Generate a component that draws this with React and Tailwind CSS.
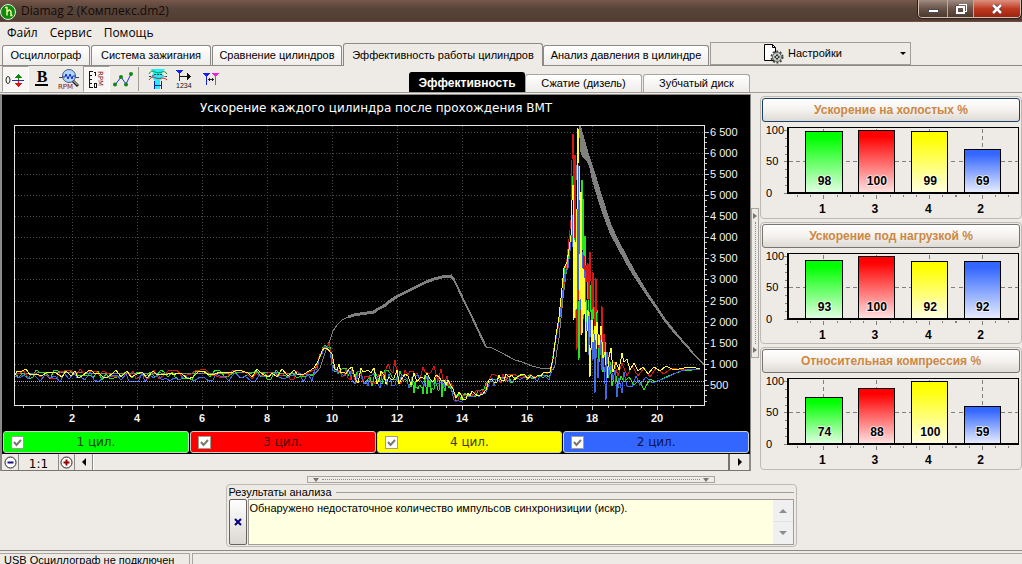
// src/App.jsx
import React, { useState } from 'react';

const MENU = ['Файл', 'Сервис', 'Помощь'];

const TABS = [
  { id: 'scope',    label: 'Осциллограф',                    width: 'w-[88px]' },
  { id: 'ignition', label: 'Система зажигания',              width: 'w-[120px]' },
  { id: 'compare',  label: 'Сравнение цилиндров',            width: 'w-[130px]' },
  { id: 'work',     label: 'Эффективность работы цилиндров', width: 'w-[200px]' },
  { id: 'pressure', label: 'Анализ давления в цилиндре',     width: 'w-[166px]' },
];

const SUB_TABS = [
  { id: 'eff',  label: 'Эффективность',   width: 'w-[116px]' },
  { id: 'comp', label: 'Сжатие (дизель)', width: 'w-[117px]' },
  { id: 'gear', label: 'Зубчатый диск',   width: 'w-[107px]' },
];

const CYLINDERS = [
  { id: 1, color: '#00ff00', trace: '#22e622', bg: 'bg-[#00ff00]', text: 'text-[#064006]' },
  { id: 3, color: '#ff0000', trace: '#d81818', bg: 'bg-[#ff0000]', text: 'text-[#500000]' },
  { id: 4, color: '#ffff00', trace: '#ffff30', bg: 'bg-[#ffff00]', text: 'text-[#404000]' },
  { id: 2, color: '#3366ff', trace: '#3f68e8', bg: 'bg-[#3366ff]', text: 'text-[#0a1450]' },
];

const PANELS = [
  { title: 'Ускорение на холостых %',    values: [98, 100, 99, 69], focused: true },
  { title: 'Ускорение под нагрузкой %',  values: [93, 100, 92, 92] },
  { title: 'Относительная компрессия %', values: [74, 88, 100, 59] },
];

/* ---------- main chart data ---------- */

function makeRandom(seed) {
  let s = seed;
  return () => {
    s = (s * 16807) % 2147483647;
    return s / 2147483647;
  };
}

// common shape of all traces: [x, y, noise]
const IDLE = [
  [14, 375, 5], [312, 375, 5], [316, 369, 2], [320, 355, 4], [325, 346, 3], [329, 346, 4],
  [333, 364, 6], [338, 370, 6], [346, 374, 7], [358, 377, 8], [380, 377, 9], [404, 379, 8],
  [414, 379, 7], [446, 380, 6], [451, 388, 4], [456, 398, 5], [466, 397, 5], [484, 392, 3],
  [488, 380, 7], [500, 380, 5], [530, 377, 3], [550, 375, 3], [553, 360, 4], [556, 336, 4],
  [560, 310, 8], [564, 276, 8], [567, 266, 7], [570, 246, 6],
];

// run-up bursts and the settling tail, one list for each cylinder
const BURST = {
  1: [[571, 235], [572, 190], [573, 176], [574, 262], [575, 210], [576, 318], [577, 250], [578, 300],
    [579, 360], [580, 212], [581, 320], [582, 180], [582, 250], [583, 199], [584, 305], [585, 236],
    [586, 330], [588, 270], [589, 340], [591, 285], [592, 350], [593, 292], [595, 345], [597, 310],
    [599, 362], [601, 330], [603, 372], [605, 342], [608, 378], [610, 362], [612, 386], [615, 370],
    [618, 388], [621, 376], [624, 382], [629, 377], [634, 385], [639, 380], [644, 390], [650, 379],
    [656, 382], [662, 379], [668, 376], [676, 373], [684, 370], [692, 370], [700, 369]],
  3: [[571, 220], [572, 160], [573, 134], [574, 240], [575, 155], [576, 290], [577, 350], [578, 165],
    [579, 300], [580, 220], [581, 335], [582, 290], [584, 255], [585, 292], [586, 265], [587, 282],
    [588, 263], [589, 300], [590, 252], [592, 310], [593, 272], [595, 340], [596, 278], [598, 345],
    [600, 350], [602, 306], [603, 355], [604, 334], [606, 372], [608, 355], [610, 367], [614, 362],
    [618, 376], [622, 363], [627, 376], [632, 366], [638, 376], [644, 368], [650, 377], [656, 368],
    [664, 374], [672, 368], [682, 370], [700, 369]],
  4: [[571, 236], [572, 200], [573, 185], [574, 320], [575, 240], [576, 310], [577, 210], [578, 128],
    [579, 163], [580, 300], [581, 192], [582, 335], [583, 268], [584, 315], [585, 278], [586, 352],
    [588, 310], [590, 377], [592, 320], [593, 342], [595, 326], [596, 350], [597, 322], [599, 345],
    [601, 326], [603, 358], [605, 352], [607, 378], [609, 357], [611, 348], [613, 372], [616, 362],
    [619, 370], [622, 353], [624, 362], [627, 359], [630, 370], [634, 363], [638, 371], [643, 367],
    [648, 374], [654, 367], [660, 371], [666, 366], [674, 370], [684, 368], [692, 367], [700, 369]],
  2: [[571, 242], [572, 225], [573, 215], [574, 247], [575, 310], [576, 260], [577, 310], [578, 166],
    [579, 290], [580, 200], [581, 310], [582, 250], [583, 320], [585, 270], [586, 335], [588, 310],
    [589, 355], [591, 320], [593, 360], [594, 330], [595, 393], [596, 338], [598, 378], [600, 340],
    [602, 370], [603, 350], [606, 400], [607, 352], [609, 375], [611, 365], [613, 380], [615, 370],
    [617, 397], [619, 378], [622, 393], [624, 372], [627, 386], [632, 387], [636, 376], [640, 385],
    [646, 377], [652, 383], [660, 380], [668, 377], [678, 372], [688, 369], [700, 370]],
};

const OFFSET = { 1: 0, 3: -1, 4: -1, 2: 2 };

function envelope(x) {
  const i = Math.max(1, IDLE.findIndex(p => p[0] >= x));
  const [x0, y0, n0] = IDLE[i - 1];
  const [x1, y1, n1] = IDLE[i];
  const k = (x - x0) / (x1 - x0);
  return [y0 + (y1 - y0) * k, n0 + (n1 - n0) * k];
}

function buildTrace(id) {
  const rnd = makeRandom(id * 791933 + 4513);
  const pts = [];
  let x = 14;
  while (x < 570) {
    const [base, noise] = envelope(x);
    let y = base + OFFSET[id] + (rnd() - 0.5) * 2 * noise;
    if (x > 384 && x < 449) {
      if (id === 3) y -= rnd() * 10;
      if (id === 1 && x > 408) y += rnd() * 12;
    }
    pts.push([x, Math.round(y)]);
    x += x < 312 ? 3 + Math.round(rnd() * 3) : id === 1 && x > 408 && x < 450 ? 1 : 2 + Math.round(rnd());
  }
  return pts.concat(BURST[id]).map(p => p.join(',')).join(' ');
}

const DRAW_ORDER = [1, 3, 2, 4];
const TRACES = DRAW_ORDER.map(id => ({ ...CYLINDERS.find(c => c.id === id), points: buildTrace(id) }));

const X_LABELS = [2, 4, 6, 8, 10, 12, 14, 16, 18, 20];
const Y_LABELS = [500, 1000, 1500, 2000, 2500, 3000, 3500, 4000, 4500, 5000, 5500, 6000, 6500];
const toX = v => Math.round(7 + v * 32.5);
const toY = v => Math.round(406 - v * 0.0422);
const fmt = v => (v >= 1000 ? `${Math.floor(v / 1000)} ${String(v % 1000).padStart(3, '0')}` : `${v}`);

function MainChart({ visible }) {
  return (
    <svg viewBox="2 95 748 335" className="block w-full" role="img" aria-label="Ускорение каждого цилиндра">
      <text x="376" y="112" textAnchor="middle" fill="#fff" className="font-['DejaVu_Sans',sans-serif] text-[12px]">
        Ускорение каждого цилиндра после прохождения ВМТ
      </text>

      {/* grid */}
      <g stroke="#484848" strokeDasharray="1 2" shapeRendering="crispEdges">
        {X_LABELS.map(v => <line key={v} x1={toX(v) + 0.5} x2={toX(v) + 0.5} y1="126" y2="405" />)}
        {Y_LABELS.map(v => <line key={v} x1="15" x2="704" y1={toY(v) + 0.5} y2={toY(v) + 0.5} />)}
      </g>

      {/* rpm curve */}
      <g fill="none" stroke="#808080" strokeWidth="1" shapeRendering="crispEdges">
        <polyline points="14,374 60,372 105,374 160,373 215,374 260,372 314,375 320,368 326,350 330,340 333,331 337,325 342,320 348,317" />
        <polyline strokeWidth="3" points="348,317 354,315 360,314 367,313 374,312 378,309 384,306 390,301 398,296 408,291 418,286 426,282 434,279 442,277 451,276 454,280" />
        <polyline strokeWidth="2" points="453,278 458,288 464,301 471,315 478,330 486,347" />
        <polyline points="486,347 490,347 500,352 515,360 522,362 532,366 540,368 549,368 553,370 555,365 557,350 559,338 561,318 563,298 565,282 568,258 570,243 574,210 577,165 578,140 580,126" />
      </g>
      <polygon
        fill="#808080"
        shapeRendering="crispEdges"
        points="579,126 581,126 584,137 588,151 594,169 600,189 606,208 612,226 619,241 627,256 634,269 641,281 649,294 657,306 665,318 673,328 682,339 690,348 697,357 704,364
          703,365 696,358 689,350 681,341 672,331 664,321 656,309 648,298 640,286 632,274 625,262 617,247 610,234 604,218 597,197 592,180 589,166 586,160 582,157 580,150"
      />

      {TRACES.filter(t => visible[t.id]).map(t => (
        <polyline key={t.id} points={t.points} fill="none" stroke={t.trace} strokeWidth="1" shapeRendering="crispEdges" />
      ))}

      {/* strongest strokes of the blue burst stay in front */}
      {visible[2] && (
        <path d="M572.5 215v32M578.5 166v36M579.5 200v54M585.5 272v30M588.5 316v30M595.5 340v52M601.5 344v24M606.5 356v42" stroke="#3f68e8" fill="none" shapeRendering="crispEdges" />
      )}

      <line x1="15" x2="704" y1="381.5" y2="381.5" stroke="#5fe0d8" strokeDasharray="1 1" shapeRendering="crispEdges" />
      <rect x="14.5" y="125.5" width="690" height="280" fill="none" stroke="#e4e4e4" shapeRendering="crispEdges" />

      {/* axis ticks */}
      <g stroke="#c8c8c8" shapeRendering="crispEdges">
        {Array.from({ length: 43 }, (_, i) => (i + 1) / 2).filter(v => v < 21.5).map(v => (
          <line key={v} x1={toX(v) + 0.5} x2={toX(v) + 0.5} y1="406" y2={v % 2 ? 408 : 410} />
        ))}
        {Array.from({ length: 52 }, (_, i) => (i + 1) * 125).map(v => (
          <line key={v} x1="705" x2={v % 500 ? 707 : 709} y1={toY(v) + 0.5} y2={toY(v) + 0.5} />
        ))}
      </g>
      <g fill="#f4f4f4" className="font-['Liberation_Sans',Arial,sans-serif] text-[11px]">
        {X_LABELS.map(v => (
          <text key={v} x={toX(v)} y="422" textAnchor="middle" className="font-bold">{v}</text>
        ))}
        {Y_LABELS.map(v => <text key={v} x="710" y={toY(v) + 4}>{fmt(v)}</text>)}
      </g>
    </svg>
  );
}

/* ---------- side bar charts ---------- */

const BAR_X = [43, 95, 148, 200];

function BarPanel({ title, values, focused }) {
  return (
    <section className="rounded-[4px] border border-[#bdbab6] px-px pt-px pb-0">
      <button
        className={`block w-full h-6 rounded-[3px] border bg-linear-to-b from-white via-[#f4f2ef] to-[#dedad5] text-[12px] leading-[22px] font-bold text-[#cc8844] ${
          focused ? 'border-[#1c3f66]' : 'border-[#77736f]'
        }`}
      >
        {title}
      </button>
      <svg viewBox="0 0 256 95" className="block w-full" role="img" aria-label={title}>
        <defs>
          {CYLINDERS.map(c => (
            <linearGradient key={c.id} id={`bar${c.id}`} x1="0" y1="0" x2="0" y2="1">
              <stop offset="0.1" stopColor={c.color} />
              <stop offset="1" stopColor={c.color} stopOpacity="0.12" />
            </linearGradient>
          ))}
        </defs>
        <g shapeRendering="crispEdges">
          <g stroke="#808080" strokeDasharray="4 3">
            <line x1="27" x2="254" y1="39.5" y2="39.5" />
            {BAR_X.map(x => <line key={x} x1={x + 18.5} x2={x + 18.5} y1="7" y2="70" />)}
          </g>
          <path d="M26 5.5h228.5V70" fill="none" stroke="#000" />
          <path d="M26 5v66M25 70.5h230" fill="none" stroke="#000" strokeWidth="2" />
          <path d="M22 8.5h3M22 39.5h3M22 70.5h3M23 16.5h2M23 24.5h2M23 32.5h2M23 47.5h2M23 55.5h2M23 63.5h2" stroke="#808080" />
          <path d="M35.5 72v2M48.5 72v2M61.5 72v4M74.5 72v2M87.5 72v2M100.5 72v2M113.5 72v4M127.5 72v2M140.5 72v2M153.5 72v2M166.5 72v4M179.5 72v2M192.5 72v2M205.5 72v2M218.5 72v4M231.5 72v2M244.5 72v2" stroke="#808080" />
          {values.map((v, i) => {
            const h = Math.round(v * 0.61);
            return (
              <g key={i}>
                <rect x={BAR_X[i]} y={69 - h} width="36" height={h} fill="#fff" />
                <rect x={BAR_X[i] + 0.5} y={69.5 - h} width="36" height={h} fill={`url(#bar${CYLINDERS[i].id})`} stroke="#000" />
              </g>
            );
          })}
        </g>
        <g className="text-[11px]" fill="#000">
          <text x="22" y="12" textAnchor="end">100</text>
          <text x="4" y="43">50</text>
          <text x="4" y="74">0</text>
        </g>
        <g className="text-[12px] font-bold" textAnchor="middle">
          {values.map((v, i) => (
            <g key={i}>
              <text x={BAR_X[i] + 19} y="63" stroke="#fff" strokeWidth="2" strokeOpacity="0.6" paintOrder="stroke" fill="#000">{v}</text>
              <text x={BAR_X[i] + 17} y="90" fill="#000">{CYLINDERS[i].id}</text>
            </g>
          ))}
        </g>
      </svg>
    </section>
  );
}

/* ---------- toolbar ---------- */

const ICONS = {
  zero: (
    <g fill="none" shapeRendering="crispEdges">
      <ellipse cx="2" cy="12" rx="2" ry="3.5" stroke="#222" shapeRendering="auto" />
      <path d="M6 12.5h12" stroke="#2233aa" />
      <path d="M12.5 8v4" stroke="#118811" />
      <path d="M9 10l3.5-4 3.5 4z" fill="#118811" />
      <path d="M12.5 13v4" stroke="#dd1111" />
      <path d="M9 15l3.5 4 3.5-4z" fill="#dd1111" />
    </g>
  ),
  bold: (
    <g>
      <text x="9" y="14" textAnchor="middle" fill="#000" className="font-['Liberation_Serif',serif] text-[16px] font-bold">B</text>
      <path d="M2 17h13" stroke="#000" strokeWidth="2" shapeRendering="crispEdges" />
    </g>
  ),
  zoomRpm: (
    <g>
      <path d="M-1 9.5h20" stroke="#334477" />
      <circle cx="9" cy="8" r="6.5" fill="#aed8ff" stroke="#445577" />
      <path d="M3 9h2l1-3 2 5 2-5 2 5 1-3h2" fill="none" stroke="#1122cc" />
      <path d="M13 13l5 5" stroke="#222" strokeWidth="3" />
      <path d="M13.5 13l4 4" stroke="#eee" />
      <text x="-2" y="21" fill="#881111" className="font-['DejaVu_Sans',sans-serif] text-[7px]">RPM</text>
    </g>
  ),
  rpmAxis: (
    <g>
      <path d="M6 3.5H2.5v16H6M3 7.5h2M3 11.5h2M3 15.5h2" fill="none" stroke="#111" shapeRendering="crispEdges" />
      <path d="M7 4.5h1.5V8M7.5 15.5h2v4h-2z" fill="none" stroke="#111" shapeRendering="crispEdges" />
      <text transform="translate(11 3) rotate(90)" x="0" y="0" fill="#881111" className="font-['DejaVu_Sans',sans-serif] text-[7px]">RPM</text>
    </g>
  ),
  nodes: (
    <g>
      <path d="M1 17l6-8 5 7 5-10" fill="none" stroke="#2233ee" />
      <g fill="#118811">
        <circle cx="1" cy="16.5" r="2" /><circle cx="7" cy="9" r="2" />
        <circle cx="12" cy="16.5" r="2" /><circle cx="17" cy="6" r="2" />
      </g>
    </g>
  ),
  average: (
    <g fill="none">
      <path d="M3 1h14l-3 4 1 4-3 4v8H7v-8L4 9l1-4z" fill="#22eeff" />
      <path d="M1 6c2-4 4-3 6-2s5 1 7 0 4 0 5 2" stroke="#119911" />
      <path d="M1 8.5h3l2-2h8l2 2h3" stroke="#113355" strokeDasharray="2 1" />
      <path d="M1 12c3-4 4-3 7-2s5 0 6 0 3 0 5 2" stroke="#cc2222" />
      <path d="M6.5 13v8M13.5 13v8M7 17.5h6" stroke="#1122aa" />
    </g>
  ),
  marker: (
    <g shapeRendering="crispEdges">
      <path d="M1 2h7L5 6v7H4V6z" fill="#1122ee" />
      <path d="M5 8.5h9" stroke="#111" />
      <path d="M12 5l4 3.5-4 3.5z" fill="#111" />
      <text x="1" y="20" fill="#111" className="font-['Liberation_Sans',sans-serif] text-[7px]">1234</text>
    </g>
  ),
  markers: (
    <g shapeRendering="crispEdges">
      <path d="M1 5h7L5 9v8H4V9z" fill="#1122ee" />
      <path d="M10 5h7l-3 4v8h-1V9z" fill="#ee22dd" />
      <path d="M6 11.5h6M7.5 10v3M10.5 10v3" stroke="#222" fill="none" />
    </g>
  ),
};

const TOOLS = [
  { id: 'zero', title: 'Ноль', pressed: true },
  { id: 'bold', title: 'Толщина линий' },
  { id: 'zoomRpm', title: 'Масштаб RPM' },
  { id: 'rpmAxis', title: 'Шкала RPM', pressed: true },
  { id: 'nodes', title: 'Точки' },
  { id: 'average', title: 'Усреднение' },
  { id: 'marker', title: 'Маркер' },
  { id: 'markers', title: 'Два маркера' },
];

function ToolButton({ id, title, pressed }) {
  return (
    <button
      aria-label={title}
      aria-pressed={!!pressed}
      className={`flex h-[26px] w-[27px] items-center justify-center border ${
        pressed ? 'border-t-[#a09c98] border-l-[#a09c98] border-r-white border-b-white bg-[#f8f7f5]' : 'border-transparent'
      }`}
    >
      <svg width="20" height="22" viewBox="0 0 20 22" className="overflow-visible">{ICONS[id]}</svg>
    </button>
  );
}

function Toolbar() {
  return (
    <div className="flex items-center pl-[2px]">
      {TOOLS.slice(0, 5).map(t => <ToolButton key={t.id} {...t} />)}
      <div className="mx-px h-6 w-px bg-[#a09c98]" />
      <div className="w-1" />
      {TOOLS.slice(5).map(t => <ToolButton key={t.id} {...t} />)}
    </div>
  );
}

/* ---------- window parts ---------- */

function TitleBar() {
  return (
    <header className="flex h-[22px] shrink-0 items-start justify-between border-b border-[#6e4c42] bg-linear-to-b from-[#77584b] via-[#594439] via-40% to-[#523d33]">
      <div className="flex h-[21px] items-center gap-1">
        <svg width="17" height="18" viewBox="0 0 17 18" aria-hidden="true">
          <circle cx="8" cy="10" r="7.5" fill="#0d8a12" stroke="#e8f0d8" />
          <path d="M5 5.5h2v8M7 10q3-4 4 0v3.5h1.5" fill="none" stroke="#f4f490" strokeWidth="1.5" />
        </svg>
        <h1 className="font-['Open_Sans','Noto_Sans',sans-serif] text-[12px] leading-5 text-[#140c08]">Diamag 2 (Комплекс.dm2)</h1>
      </div>
      <div className="mr-px flex h-[18px] overflow-hidden rounded-b-[4px] border border-t-0 border-[#d0beb4] outline outline-[#2c1e18]">
        <button aria-label="Свернуть" className="flex w-7 items-end justify-center bg-linear-to-b from-[#a08c82] via-[#6b5449] to-[#4d382e] pb-1">
          <span className="h-[4px] w-[11px] border border-[#4c4c50] bg-white" />
        </button>
        <button aria-label="Развернуть" className="flex w-[27px] items-center justify-center border-x border-[#bca99e] bg-linear-to-b from-[#a08c82] via-[#6b5449] to-[#4d382e]">
          <svg width="12" height="12" viewBox="0 0 12 12" fill="none" shapeRendering="crispEdges">
            <path d="M3.5 1.5h8v7h-2" stroke="#fff" />
            <path d="M2 4h7v6H2z" stroke="#fff" strokeWidth="2" />
            <path d="M.5 2.5h2M.5 2.5v8.5h10" stroke="#4c4c50" />
          </svg>
        </button>
        <button aria-label="Закрыть" className="flex w-[46px] items-center justify-center bg-linear-to-b from-[#dc9080] via-[#c03a20] to-[#9c2410]">
          <svg width="12" height="10" viewBox="0 0 12 10">
            <path d="M2 1l8 8M10 1L2 9" stroke="#5c3030" strokeWidth="4" />
            <path d="M2 1l8 8M10 1L2 9" stroke="#fff" strokeWidth="2.5" />
          </svg>
        </button>
      </div>
    </header>
  );
}

function PageTabs({ active, onSelect }) {
  return (
    <div className="relative flex h-[23px] shrink-0 items-end border-b border-[#8c8986] pl-[2px]">
      {TABS.map(tab => (
        <button
          key={tab.id}
          onClick={() => onSelect(tab.id)}
          className={`${tab.width} shrink-0 whitespace-nowrap rounded-t-[3px] border border-b-0 border-[#8c8986] text-[11px] ${
            active === tab.id
              ? '-mb-px h-[23px] bg-[#eeebe7]'
              : 'mr-px h-5 bg-linear-to-b from-white to-[#efedea]'
          }`}
        >
          {tab.label}
        </button>
      ))}
      <button aria-haspopup="menu" className="flex h-[23px] w-[201px] shrink-0 items-center border border-[#a09c98] pr-1 pl-[52px] text-[11px]">
        <svg width="21" height="21" viewBox="0 0 21 21" fill="none" aria-hidden="true">
          <path d="M1.5 1.5h8l3 3V17.5H1.5z" fill="#fff" stroke="#000" />
          <path d="M9.5 1.5v3h3" stroke="#000" />
          <circle cx="14" cy="14" r="5.5" stroke="#444" strokeWidth="2" strokeDasharray="2 1.5" />
          <circle cx="14" cy="14" r="4.5" fill="#c4d0c4" stroke="#666" />
          <path d="M14 11v6M11 14h6" stroke="#333" />
          <circle cx="14" cy="14" r="1.5" fill="#fff" stroke="#222" />
        </svg>
        <span className="ml-1 grow text-left">Настройки</span>
        <span className="border-x-[3px] border-t-[3px] border-x-transparent border-t-black" />
      </button>
    </div>
  );
}

function SubTabs({ active, onSelect }) {
  return (
    <div className="flex items-end">
      {SUB_TABS.map(tab => (
        <button
          key={tab.id}
          onClick={() => onSelect(tab.id)}
          className={`${tab.width} whitespace-nowrap rounded-t-[3px] border border-b-0 leading-none ${
            active === tab.id
              ? 'h-5 border-black bg-black text-[12px] font-bold text-white'
              : 'mr-px h-[18px] border-[#a8a5a1] bg-linear-to-b from-white to-[#efedea] text-[11px]'
          }`}
        >
          {tab.label}
        </button>
      ))}
    </div>
  );
}

function CylinderToggles({ visible, onToggle }) {
  return (
    <div className="grid grid-cols-4 gap-px bg-black px-px pt-px pb-px">
      {CYLINDERS.map(c => (
        <label
          key={c.id}
          className={`flex h-[22px] items-center rounded-[3px] border border-[#c8d0c8] pr-5 pl-[7px] font-['DejaVu_Sans',sans-serif] text-[12px] ${c.bg} ${c.text}`}
        >
          <span className="grid">
            <input
              type="checkbox"
              checked={visible[c.id]}
              onChange={() => onToggle(c.id)}
              className="peer size-[13px] appearance-none border border-[#a09c90] bg-white [grid-area:1/1]"
            />
            <svg viewBox="0 0 13 13" className="pointer-events-none invisible size-[13px] [grid-area:1/1] peer-checked:visible">
              <path d="M3 6l2.5 3L10 4" fill="none" stroke="#7c786c" strokeWidth="2" />
            </svg>
          </span>
          <span className="grow text-center">{c.id} цил.</span>
        </label>
      ))}
    </div>
  );
}

function ZoomBar() {
  const btn = 'flex items-center justify-center border-r border-[#8c8986]';
  return (
    <div className="flex h-[17px] border-b border-[#77736f] bg-[#eeebe7]">
      <button aria-label="Уменьшить" className={`${btn} w-[17px]`}>
        <svg width="13" height="13" viewBox="0 0 13 13" fill="none">
          <circle cx="6.5" cy="6.5" r="5.5" fill="#fff" stroke="#222" />
          <path d="M3.5 6.5h6" stroke="#111188" strokeWidth="2" />
        </svg>
      </button>
      <button className={`${btn} w-10 pt-1 font-['DejaVu_Sans',sans-serif] text-[12px] leading-none`}>1:1</button>
      <button aria-label="Увеличить" className={`${btn} w-4`}>
        <svg width="13" height="13" viewBox="0 0 13 13" fill="none">
          <circle cx="6.5" cy="6.5" r="5.5" fill="#fff" stroke="#222" />
          <path d="M3.5 6.5h6M6.5 3.5v6" stroke="#990000" strokeWidth="2" />
        </svg>
      </button>
      <button aria-label="Влево" className={`${btn} w-[18px]`}>
        <span className="border-y-4 border-r-4 border-y-transparent border-r-black" />
      </button>
      <div className="grow border-r-2 border-l border-l-white border-r-[#77736f]" />
      <button aria-label="Вправо" className={`${btn} w-[20px]`}>
        <span className="border-y-4 border-l-4 border-y-transparent border-l-black" />
      </button>
    </div>
  );
}

function Splitter({ vertical }) {
  return vertical ? (
    <div className="flex h-[150px] w-2 flex-col items-center gap-[3px] self-center border border-[#a8a5a1] py-1">
      <span className="border-y-[3px] border-l-4 border-y-transparent border-l-[#77736f]" />
      <span className="w-0 grow border-l border-dotted border-[#8c8986]" />
      <span className="border-y-[3px] border-l-4 border-y-transparent border-l-[#77736f]" />
    </div>
  ) : (
    <div className="mx-auto flex h-[7px] w-2/5 items-center gap-[3px] border border-[#a8a5a1] px-[5px]">
      <span className="border-x-[3px] border-t-4 border-x-transparent border-t-[#77736f]" />
      <span className="h-0 grow border-t border-dotted border-[#8c8986]" />
      <span className="border-x-[3px] border-t-4 border-x-transparent border-t-[#77736f]" />
    </div>
  );
}

function Results() {
  return (
    <section className="mx-auto mt-px w-[571px] rounded-[4px] border border-[#bdbab6] p-[2px] pt-0 pb-px">
      <div className="flex h-[14px] items-center gap-1">
        <label htmlFor="results" className="text-[11px] leading-none">Результаты анализа</label>
        <span className="h-px grow bg-[#a09c98]" />
      </div>
      <div className="flex h-[46px] gap-px">
        <button aria-label="Очистить" className="flex w-[18px] shrink-0 items-center justify-center rounded-[2px] border border-[#66625e] bg-linear-to-b from-white to-[#dcd8d3]">
          <svg width="8" height="8" viewBox="0 0 8 8"><path d="M1 1l6 6M7 1L1 7" stroke="#000080" strokeWidth="2" /></svg>
        </button>
        <div className="flex grow border border-[#a09c98]">
          <textarea
            id="results"
            readOnly
            defaultValue="Обнаружено недостаточное количество импульсов синхронизиции (искр)."
            className="grow resize-none bg-[#ffffe1] px-px pt-px text-[11px] leading-[14px] outline-none"
          />
          <div className="grid w-5 grid-rows-2 bg-[#f0f0f0]">
            <button aria-label="Вверх" className="flex items-center justify-center border-b border-[#e2e2e6]">
              <span className="border-x-4 border-b-4 border-x-transparent border-b-[#8c8c90]" />
            </button>
            <button aria-label="Вниз" className="flex items-center justify-center">
              <span className="border-x-4 border-t-4 border-x-transparent border-t-[#8c8c90]" />
            </button>
          </div>
        </div>
      </div>
    </section>
  );
}

export default function App() {
  const [tab, setTab] = useState('work');
  const [subTab, setSubTab] = useState('eff');
  const [visible, setVisible] = useState({ 1: true, 2: true, 3: true, 4: true });

  const toggle = id => setVisible(v => ({ ...v, [id]: !v[id] }));

  return (
    <div className="flex h-screen flex-col overflow-hidden bg-[#eeebe7] font-['Liberation_Sans',Arial,sans-serif] text-black">
      <TitleBar />

      <nav className="flex h-[21px] shrink-0 items-center gap-3 pl-[7px] font-['Open_Sans','Noto_Sans',sans-serif] text-[12px]">
        {MENU.map(m => <button key={m}>{m}</button>)}
      </nav>

      <PageTabs active={tab} onSelect={setTab} />

      <div className="grid shrink-0 grid-cols-[409px_1fr] items-end border-b border-[#a09c98]">
        <Toolbar />
        <SubTabs active={subTab} onSelect={setSubTab} />
      </div>

      <main className="grid shrink-0 grid-cols-[1fr_9px_262px] pt-px">
        <div className="border-t border-r border-l-2 border-[#8c8986]">
          <div className="bg-black"><MainChart visible={visible} /></div>
          <CylinderToggles visible={visible} onToggle={toggle} />
          <ZoomBar />
        </div>
        <Splitter vertical />
        <aside className="flex flex-col gap-[3px] pt-[2px]">
          {PANELS.map(p => <BarPanel key={p.title} {...p} />)}
        </aside>
      </main>

      <div className="shrink-0 border-b border-[#8c8986] pt-[5px] pb-[3px]">
        <Splitter />
        <Results />
      </div>

      <footer className="mt-[2px] flex shrink-0 gap-[2px] text-[11px] leading-[12px] whitespace-nowrap">
        <div className="w-[190px] border-t border-r border-[#a8a5a1] pl-1">USB Осциллограф не подключен</div>
        <div className="grow border-t border-l border-[#a8a5a1]" />
      </footer>
    </div>
  );
}
